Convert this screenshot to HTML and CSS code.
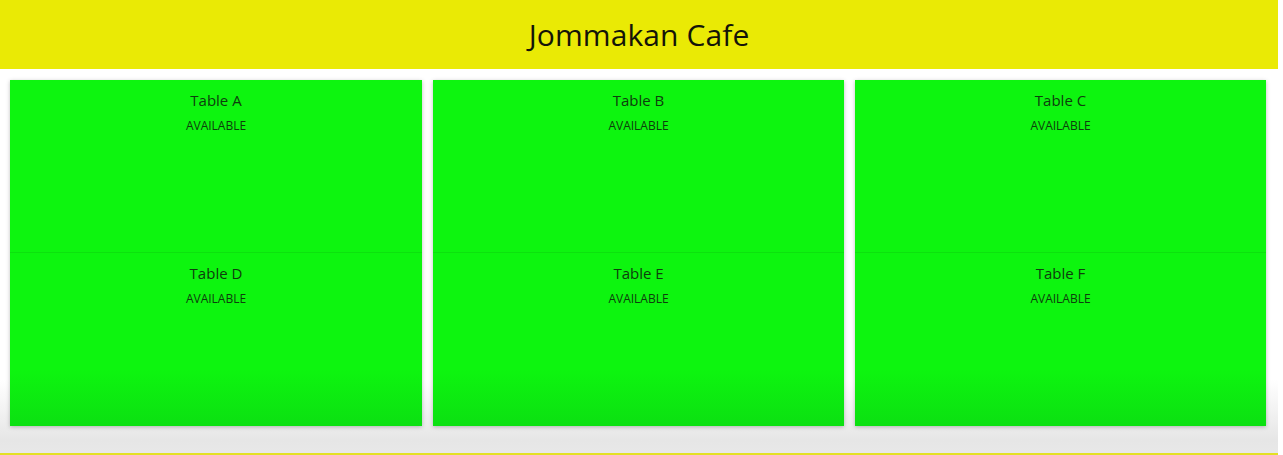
FILE: index.html
```html
<!DOCTYPE html>
<html>
<head>
<meta charset="utf-8">
<link rel="stylesheet" href="styles.css">
</head>
<body>
<div class="page">
  <header class="header"><h1 class="title">Jommakan Cafe</h1></header>
  <main class="board">
    <div class="col">
      <div class="table"><div class="name">Table A</div><div class="status">AVAILABLE</div></div>
      <div class="table"><div class="name">Table D</div><div class="status">AVAILABLE</div></div>
    </div>
    <div class="col">
      <div class="table"><div class="name">Table B</div><div class="status">AVAILABLE</div></div>
      <div class="table"><div class="name">Table E</div><div class="status">AVAILABLE</div></div>
    </div>
    <div class="col">
      <div class="table"><div class="name">Table C</div><div class="status">AVAILABLE</div></div>
      <div class="table"><div class="name">Table F</div><div class="status">AVAILABLE</div></div>
    </div>
  </main>
  <div class="footer-space"></div>
  <div class="footer-line"></div>
</div>
</body>
</html>
```
FILE: styles.css
```css
html, body {
  margin: 0;
  padding: 0;
  background: #ffffff;
  height: 455px;
  overflow: hidden;
}
.page {
  width: 1278px;
  font-family: "Open Sans", "Noto Sans", sans-serif;
  display: flex;
  flex-direction: column;
  background: linear-gradient(#ffffff 0px, #ffffff 380px, #e6e6e6 440px, #e8e8e8 453px);
  height: 455px;
}
.header {
  height: 69px;
  background: #eaea05;
  display: flex;
  align-items: center;
  justify-content: center;
}
.title {
  margin: 0;
  font-weight: 400;
  font-size: 30px;
  color: #141408;
  letter-spacing: 0.1px;
}
.board {
  display: grid;
  grid-template-columns: 412px 411px 411px;
  column-gap: 11px;
  padding: 11px 0 0 10px;
}
.col {
  display: flex;
  flex-direction: column;
  box-shadow: 0 1px 4px rgba(0,0,0,0.25);
  background: linear-gradient(#0df50f 0px, #0df50f 290px, #0ce012 346px);
}
.table {
  height: 172px;
  display: flex;
  flex-direction: column;
  align-items: center;
  padding-top: 9px;
  box-sizing: border-box;
  color: #0d3d0d;
}
.table + .table {
  height: 174px;
  border-top: 1px solid #0ce20e;
}
.name {
  font-size: 15px;
  line-height: 22px;
}
.status {
  font-size: 12px;
  line-height: 16px;
  margin-top: 7px;
}
.footer-space {
  flex: 1;
}
.footer-line {
  height: 2px;
  background: #e3e024;
}
```
